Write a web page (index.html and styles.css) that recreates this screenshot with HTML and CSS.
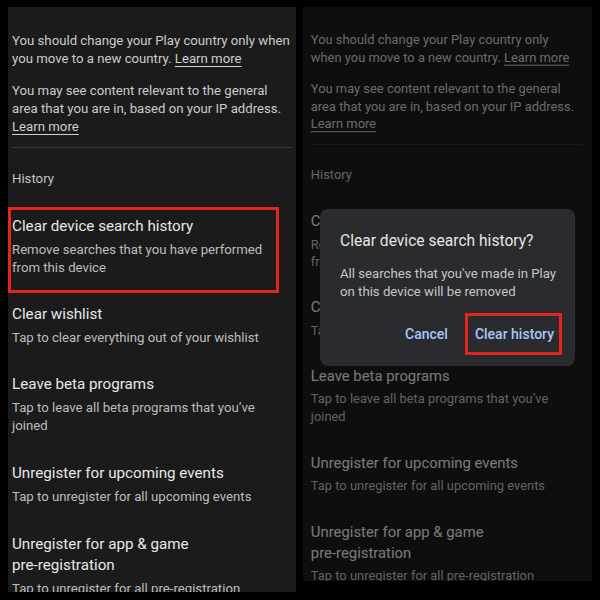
FILE: index.html
```html
<!DOCTYPE html>
<html lang="en">
<head>
    <meta charset="UTF-8">
    <meta name="viewport" content="width=device-width, initial-scale=1.0">
    <title>Clear device search history</title>
    <link rel="stylesheet" href="styles.css">
</head>
<body>
    <div class="screens">
        <!-- Settings list -->
        <section class="panel">
            <div class="content">
                <p class="note">You should change your Play country only when you move to a new country. <a href="#">Learn more</a></p>
                <p class="note">You may see content relevant to the general area that you are in, based on your IP address. <a href="#">Learn more</a></p>
                <hr class="divider">
                <div class="section-label">History</div>
                <div class="item marked">
                    <div class="item-title">Clear device search history</div>
                    <div class="item-sub">Remove searches that you have performed from this device</div>
                </div>
                <div class="item">
                    <div class="item-title">Clear wishlist</div>
                    <div class="item-sub">Tap to clear everything out of your wishlist</div>
                </div>
                <div class="item">
                    <div class="item-title">Leave beta programs</div>
                    <div class="item-sub">Tap to leave all beta programs that you’ve joined</div>
                </div>
                <div class="item">
                    <div class="item-title">Unregister for upcoming events</div>
                    <div class="item-sub">Tap to unregister for all upcoming events</div>
                </div>
                <div class="item">
                    <div class="item-title">Unregister for app &amp; game <span class="nowrap">pre-registration</span></div>
                    <div class="item-sub">Tap to unregister for all pre-registration</div>
                </div>
            </div>
        </section>

        <!-- Same list with the confirm dialog open -->
        <section class="panel panel-dim">
            <div class="content">
                <p class="note">You should change your Play country only when you move to a new country. <a href="#">Learn more</a></p>
                <p class="note">You may see content relevant to the general area that you are in, based on your IP address. <a href="#">Learn more</a></p>
                <hr class="divider">
                <div class="section-label">History</div>
                <div class="item">
                    <div class="item-title">Clear device search history</div>
                    <div class="item-sub">Remove searches that you have performed from this device</div>
                </div>
                <div class="item">
                    <div class="item-title">Clear wishlist</div>
                    <div class="item-sub">Tap to clear everything out of your wishlist</div>
                </div>
                <div class="item">
                    <div class="item-title">Leave beta programs</div>
                    <div class="item-sub">Tap to leave all beta programs that you’ve joined</div>
                </div>
                <div class="item">
                    <div class="item-title">Unregister for upcoming events</div>
                    <div class="item-sub">Tap to unregister for all upcoming events</div>
                </div>
                <div class="item">
                    <div class="item-title">Unregister for app &amp; game <span class="nowrap">pre-registration</span></div>
                    <div class="item-sub">Tap to unregister for all pre-registration</div>
                </div>
            </div>
            <div class="scrim"></div>
            <div class="dialog">
                <div class="dialog-title">Clear device search history?</div>
                <div class="dialog-body">All searches that you've made in Play on this device will be removed</div>
                <div class="dialog-actions">
                    <button type="button" class="text-btn cancel">Cancel</button>
                    <span class="marked-btn"><button type="button" class="text-btn">Clear history</button></span>
                </div>
            </div>
        </section>
    </div>
</body>
</html>
```

FILE: styles.css
```css
body {
    margin: 0;
    padding: 0;
    background-color: #000;
    font-family: Roboto, "Noto Sans", Arial, sans-serif;
}
.screens {
    display: flex;
    align-items: flex-start;
    gap: 7px;
    padding: 7px 0 0 8px;
}
/* Panels */
.panel {
    position: relative;
    width: 288px;
    height: 585px;
    background-color: #1b1b1b;
    overflow: hidden;
}
.panel .content {
    padding: 25px 6px 0 4px;
}
.panel-dim {
    width: 289px;
    height: 574px;
}
.panel-dim .content {
    padding-left: 8px;
    transform: scale(0.978);
    transform-origin: 0 0;
}
.scrim {
    position: absolute;
    inset: 0;
    background-color: rgba(0, 0, 0, 0.48);
}
.nowrap {
    white-space: nowrap;
}
/* Top notes */
.note {
    margin: 0;
    font-size: 13.2px;
    line-height: 18px;
    color: #cbcbcb;
}
.note + .note {
    margin-top: 14px;
}
.note a {
    color: #cfcfcf;
    text-decoration: underline;
    text-underline-offset: 3px;
}
.divider {
    border: none;
    border-top: 1px solid #363636;
    margin: 11px -2px 0 0;
}
.section-label {
    margin: 22px 0 15px;
    font-size: 13.2px;
    line-height: 18px;
    color: #c2c2c2;
}
/* List items */
.item {
    position: relative;
    padding: 13px 0 14px;
}
.item + .item + .item + .item {
    padding-top: 14px;
}
.item-title {
    font-size: 15.2px;
    line-height: 21px;
    color: #e8e8e8;
}
.item-sub {
    margin-top: 4px;
    font-size: 13.2px;
    line-height: 18px;
    color: #bdbdbd;
}
.marked::after {
    content: "";
    position: absolute;
    left: -4px;
    top: 4px;
    width: 271px;
    height: 86px;
    border: 3px solid #e3261c;
    box-sizing: border-box;
}
/* Dialog */
.dialog {
    position: absolute;
    left: 17px;
    top: 202px;
    width: 255px;
    box-sizing: border-box;
    padding: 21px 13px 11px 20px;
    background-color: #2a2b2e;
    border-radius: 8px;
}
.dialog-title {
    font-size: 15.6px;
    line-height: 22px;
    color: #e6e6e6;
}
.dialog-body {
    margin-top: 13px;
    font-size: 13.2px;
    line-height: 18px;
    color: #c4c6c8;
}
.dialog-actions {
    display: flex;
    justify-content: flex-end;
    align-items: center;
    margin-top: 12px;
}
.text-btn {
    padding: 0;
    border: none;
    background: none;
    font-family: inherit;
    font-size: 14px;
    font-weight: 500;
    line-height: 20px;
    color: #a8c7fa;
    cursor: pointer;
}
.cancel {
    margin-right: 17px;
}
.marked-btn {
    display: block;
    padding: 8px 5px 8px 7px;
    border: 3px solid #e3261c;
}
```
